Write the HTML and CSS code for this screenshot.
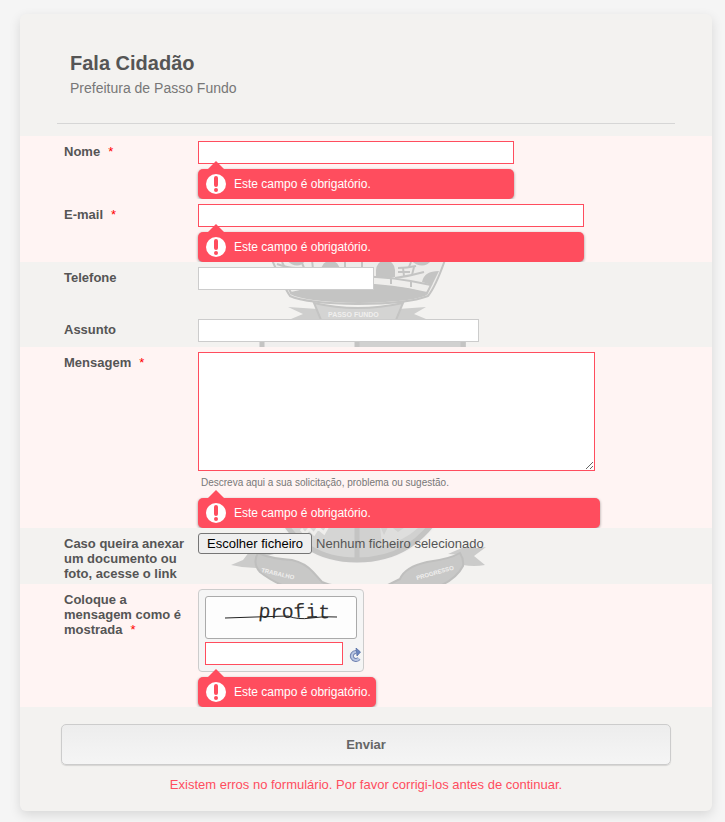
FILE: index.html
```html
<!DOCTYPE html>
<html lang="pt">
<head>
<meta charset="utf-8">
<meta name="viewport" content="width=device-width, initial-scale=1">
<title>Fala Cidadão</title>
<link rel="stylesheet" href="styles.css">
</head>
<body>
<main class="card">
  <svg class="crest" viewBox="230 260 260 326" width="260" height="326" aria-hidden="true">
    <!-- crown -->
    <path d="M272 260 C280 278 286 290 290 296 C310 306 400 307 428 296 C433 290 439 277 445 260Z" fill="#edecea" stroke="#c4c4c3" stroke-width="2"/>
    <path d="M281 271 Q300 277 323 279M339 279 Q357 281 376 279M395 278 Q410 276 424 272M277 264Q288 268 296 268M398 268Q407 268 416 266" fill="none" stroke="#c4c4c3" stroke-width="2"/>
    <path d="M282 262l5 10M290 268l-1 5M302 263l5 12M315 270l-1 8M312 260l1 9M345 262v10M352 272v8M362 262v10M368 272v8M403 268l1 8M411 262l-2 5M414 267l-2 8M344 272H372M303 269l16 2M398 272h12" stroke="#c4c4c3" stroke-width="2"/>
    <path d="M376 279V271A9 10 0 0 1 395 270V277Q386 280 376 279ZM321 279V271A9 10 0 0 1 340 271V280ZM422 282Q424 271 439 271L432 285ZM293 281q-4-9-12-8l6 12zM286 260h20q-8 11-20 0zM410 260h22q-9 11-22 0z" fill="#c4c4c3"/>
    <path d="M287 285 Q357 268 431 285 L427 293 Q357 276 291 293Z" fill="#efeeec" stroke="#c4c4c3" stroke-width="2"/>
    <path d="M318 278v6M358 276v6M391 278v6M411 281v6" stroke="#c4c4c3" stroke-width="2"/>
    <path d="M290 294 Q310 285 357 285 Q407 285 428 294 Q418 302 359 303 Q305 302 290 294Z" fill="#c4c4c3"/>
    <!-- motto ribbon -->
    <path d="M288 307L318 309L323 319H291L303 314ZM426 307L398 309L393 319H426L414 314Z" fill="#cececd"/>
    <path d="M314 303Q357 313 403 303L396 320H321Z" fill="#d4d4d3" stroke="#c4c4c3" stroke-width="2"/>
    <text x="328" y="317" class="motto">PASSO FUNDO</text>
    <!-- shield -->
    <path d="M259 342H466V440Q450 563 357 563Q264 563 259 440Z" fill="#f0efee"/>
    <path d="M357 342H466V440Q450 560 357 560Z" fill="#d1d1d0"/>
    <path d="M357 510H280Q302 560 357 560Z" fill="#d5d5d4"/>
    <path d="M262 342V440Q270 560 357 560Q444 560 463 440V342M357 342V560" fill="none" stroke="#c4c4c3" stroke-width="5"/>
    <path d="M301 529L305 534L309 529L314 534L318 528L324 533L328 526" fill="none" stroke="#efeeec" stroke-width="3"/>
    <path d="M380 526L384 535L389 525L398 532L408 525L418 528Q404 541 382 546Z" fill="#dededd"/>
    <!-- lower ribbons -->
    <path d="M253 547Q264 552 278 553L258 558L256 568Q243 568 231 565L243 560ZM464 547Q475 549 486 547L474 556L485 565Q474 567 463 565L462 555L448 554Z" fill="#cbcbca"/>
    <path d="M258 553Q272 559 292 560Q305 563 313 572L322 582Q328 585 338 586H284Q270 580 260 572Q252 563 258 553ZM460 553Q450 559 427 562Q405 567 400 579L386 586H440Q457 578 463 566Q464 559 460 553Z" fill="#c8c8c7" stroke="#bfbfbe" stroke-width="2"/>
    <g class="motto motto-small">
      <text transform="translate(261 572) rotate(13)">TRABALHO</text>
      <text transform="translate(417 580) rotate(-16)">PROGRESSO</text>
    </g>
  </svg>

  <form class="form" novalidate>
    <header class="head">
      <h1>Fala Cidadão</h1>
      <p>Prefeitura de Passo Fundo</p>
    </header>

    <div class="row error">
      <label class="label" for="nome">Nome<span class="req">*</span></label>
      <div class="field">
        <input class="box w-name" id="nome" type="text">
        <div class="bubble w-name"><svg viewBox="0 0 20 20" width="20" height="20" aria-hidden="true"><circle cx="10" cy="10" r="10" fill="#fff"/><rect x="8" y="2" width="4" height="11" rx="2" fill="#ff4d5e"/><circle cx="10" cy="16" r="2" fill="#ff4d5e"/></svg>Este campo é obrigatório.</div>
      </div>
    </div>

    <div class="row error">
      <label class="label" for="email">E-mail<span class="req">*</span></label>
      <div class="field">
        <input class="box w-email" id="email" type="email">
        <div class="bubble w-email"><svg viewBox="0 0 20 20" width="20" height="20" aria-hidden="true"><circle cx="10" cy="10" r="10" fill="#fff"/><rect x="8" y="2" width="4" height="11" rx="2" fill="#ff4d5e"/><circle cx="10" cy="16" r="2" fill="#ff4d5e"/></svg>Este campo é obrigatório.</div>
      </div>
    </div>

    <div class="row phone">
      <label class="label" for="telefone">Telefone</label>
      <div class="field"><input class="box w-phone" id="telefone" type="tel"></div>
    </div>

    <div class="row subject">
      <label class="label" for="assunto">Assunto</label>
      <div class="field"><input class="box w-subject" id="assunto" type="text"></div>
    </div>

    <div class="row error">
      <label class="label" for="mensagem">Mensagem<span class="req">*</span></label>
      <div class="field">
        <textarea class="box area" id="mensagem" aria-describedby="dica"></textarea>
        <p class="hint" id="dica">Descreva aqui a sua solicitação, problema ou sugestão.</p>
        <div class="bubble w-message"><svg viewBox="0 0 20 20" width="20" height="20" aria-hidden="true"><circle cx="10" cy="10" r="10" fill="#fff"/><rect x="8" y="2" width="4" height="11" rx="2" fill="#ff4d5e"/><circle cx="10" cy="16" r="2" fill="#ff4d5e"/></svg>Este campo é obrigatório.</div>
      </div>
    </div>

    <div class="row attach">
      <label class="label" for="anexo">Caso queira anexar um documento ou foto, acesse o link</label>
      <div class="field">
        <label class="file">
          <input class="file-input" id="anexo" type="file">
          <span class="file-button">Escolher ficheiro</span>
          <span>Nenhum ficheiro selecionado</span>
        </label>
      </div>
    </div>

    <div class="row error">
      <label class="label" for="codigo">Coloque a mensagem como é mostrada<span class="req">*</span></label>
      <div class="field">
        <div class="captcha">
          <svg class="captcha-image" viewBox="0 0 150 41" width="150" height="41">
            <text class="captcha-word" x="52" y="20" dy="0 1 0 0 0 0" rotate="6 4 -3 -4 -3 2">profit</text>
            <path d="M19 21L49 20L82 19Q92 23 105 21Q118 19 131 20" fill="none" stroke="#222"/>
          </svg>
          <div class="captcha-line">
            <input class="box w-code" id="codigo" type="text">
            <button class="reload" type="button" aria-label="Recarregar">
              <svg viewBox="0 0 12 14" width="12" height="14" aria-hidden="true"><path d="M7 4A4 4 0 1 0 10 10.500" fill="none" stroke="#7385b3" stroke-width="4"/><path d="M7 4A4 4 0 1 0 10 10.500" fill="none" stroke="#b9c6e2" stroke-width="2"/><path d="M7 0L11.500 4L8 8Z" fill="#6f88c0" stroke="#49639d" stroke-width=".7"/></svg>
            </button>
          </div>
        </div>
        <div class="bubble w-captcha"><svg viewBox="0 0 20 20" width="20" height="20" aria-hidden="true"><circle cx="10" cy="10" r="10" fill="#fff"/><rect x="8" y="2" width="4" height="11" rx="2" fill="#ff4d5e"/><circle cx="10" cy="16" r="2" fill="#ff4d5e"/></svg>Este campo é obrigatório.</div>
      </div>
    </div>

    <div class="actions">
      <button class="submit" type="submit">Enviar</button>
      <p class="summary" role="alert">Existem erros no formulário. Por favor corrigi-los antes de continuar.</p>
    </div>
  </form>
</main>
</body>
</html>
```
FILE: styles.css
```css
* { box-sizing: border-box; }

body {
  margin: 0;
  padding: 14px 13px 11px 20px;
  background: #f5f5f5;
  color: #555;
  font: 13px/15px "Liberation Sans", Arial, sans-serif;
}

h1, p { margin: 0; }

.card {
  position: relative;
  max-width: 692px;
  background: #f3f2f0;
  border-radius: 6px;
  box-shadow: 0 4px 12px rgba(0, 0, 0, .12);
}

/* Coat of arms behind the fields */
.crest {
  position: absolute;
  top: 246px;
  left: 210px;
}

.motto {
  font: bold 7px "Liberation Sans", Arial, sans-serif;
  fill: #f0efee;
}

.motto-small { font-size: 6px; }

.form { position: relative; }

.head {
  margin: 0 37px 12px;
  padding: 36px 13px 25px;
  border-bottom: 1px solid #d6d6d6;
}

.head h1 {
  font-size: 20px;
  line-height: 26px;
}

.head p {
  padding-top: 2px;
  font-size: 14px;
  line-height: 20px;
  color: #777;
}

.row {
  display: flex;
  gap: 10px;
  padding: 5px 0 0 44px;
  overflow: hidden;
}

.error { background: #fff4f3; }
.phone { padding-bottom: 24px; }
.subject { padding-bottom: 5px; }
.attach { padding-bottom: 3px; }

.label {
  flex: none;
  width: 124px;
  padding-top: 3px;
  font-weight: bold;
}

.req {
  margin-left: 8px;
  color: #f00;
  font-weight: normal;
}

.field {
  flex: 1;
  min-width: 0;
}

.box {
  display: block;
  max-width: 100%;
  height: 23px;
  margin: 0;
  padding: 2px;
  border: 1px solid #ccc;
  background: #fff;
  font: inherit;
}

.error .box { border-color: #ff4d5e; }

.w-name { width: 316px; }
.w-email { width: 386px; }
.w-phone { width: 176px; }
.w-subject { width: 281px; }
.w-message { width: 402px; }
.w-captcha { width: 178px; }
.w-code { width: 138px; }

.error .area {
  width: 397px;
  height: 119px;
}

.hint {
  padding: 4px 3px 3px;
  font-size: 10px;
  color: #777;
}

.bubble {
  position: relative;
  display: flex;
  align-items: center;
  gap: 8px;
  max-width: 100%;
  height: 30px;
  margin-top: 5px;
  padding-left: 8px;
  border-radius: 5px;
  background: #ff4d5e;
  box-shadow: 0 1px 3px rgba(0, 0, 0, .4);
  color: #fff;
  font-size: 12px;
  white-space: nowrap;
}

.bubble::before {
  content: "";
  position: absolute;
  top: -8px;
  left: 10px;
  border: 8px solid transparent;
  border-top-width: 0;
  border-bottom-color: #ff4d5e;
}

.file {
  position: relative;
  display: flex;
  align-items: center;
  gap: 4px;
  width: max-content;
}

.file-input {
  position: absolute;
  inset: 0;
  width: 100%;
  opacity: 0;
}

.file-button {
  padding: 2px 8px;
  border: 1px solid #767676;
  border-radius: 3px;
  background: #efefef;
  color: #000;
}

.captcha {
  width: 166px;
  padding: 6px;
  border: 1px solid #ccc;
  border-radius: 4px;
  background: #f5f5f5;
}

.captcha-image {
  display: block;
  box-sizing: content-box;
  border: 1px solid #aaa;
  border-radius: 3px;
  background: #fdfdfd;
}

.captcha-word {
  font: 20px "Liberation Mono", monospace;
  fill: #333;
}

.captcha-line {
  display: flex;
  align-items: center;
  gap: 6px;
  margin-top: 3px;
}

.reload {
  display: flex;
  padding: 3px 0 0;
  border: 0;
  background: none;
}

.actions { padding: 17px 41px 19px; }

.submit {
  display: block;
  width: 100%;
  height: 41px;
  border: 1px solid #ccc;
  border-radius: 5px;
  background: linear-gradient(#ededed, #f5f5f5);
  box-shadow: 0 1px 1px rgba(0, 0, 0, .12);
  color: #666;
  font: bold 13px "Liberation Sans", Arial, sans-serif;
}

.summary {
  padding-top: 12px;
  color: #ff4d5e;
  text-align: center;
}
```
